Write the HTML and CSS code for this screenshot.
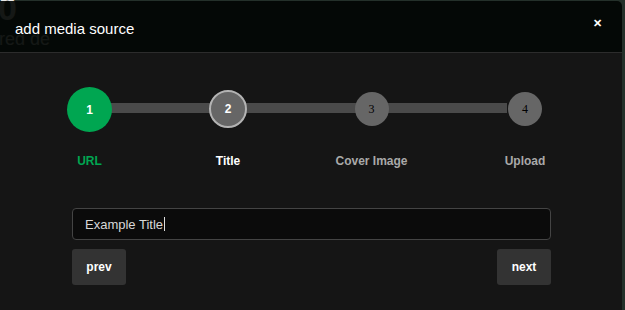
FILE: index.html
```html
<!DOCTYPE html>
<html>
<head>
<meta charset="utf-8">
<link rel="stylesheet" href="styles.css">
</head>
<body>
<div class="page">
  <div class="page-num">0</div>
  <div class="page-sub">ired de</div>
</div>
<div class="modal">
  <div class="modal-header">
    <span class="modal-title">add media source</span>
    <span class="close">&#x2715;</span>
  </div>
  <div class="modal-body">
    <div class="stepper">
      <div class="step step-done">
        <div class="dot">1</div>
        <div class="label">URL</div>
      </div>
      <div class="step step-active">
        <div class="dot">2</div>
        <div class="label">Title</div>
      </div>
      <div class="step step-todo step-wide">
        <div class="dot">3</div>
        <div class="label">Cover Image</div>
      </div>
      <div class="step step-todo step-last">
        <div class="dot">4</div>
        <div class="label">Upload</div>
      </div>
    </div>
    <div class="field">Example Title<span class="caret"></span></div>
    <div class="actions">
      <button class="btn">prev</button>
      <button class="btn">next</button>
    </div>
  </div>
</div>
</body>
</html>
```
FILE: styles.css
```css
html, body {
  margin: 0;
  padding: 0;
}
body {
  width: 625px;
  height: 310px;
  background: #24302a;
  overflow: hidden;
  position: relative;
  font-family: "Liberation Sans", Arial, sans-serif;
}
.page {
  position: absolute;
  left: -2px;
  top: -10px;
  color: #e8e8e8;
  font-weight: bold;
}
.page-num {
  font-size: 34px;
  line-height: 36px;
}
.page-sub {
  font-size: 18px;
  line-height: 18px;
  font-weight: normal;
  margin-left: -3px;
  margin-top: 4px;
}
.modal {
  position: absolute;
  left: -10px;
  top: 1px;
  width: 632px;
  height: 309px;
  border-radius: 0 5px 0 0;
  overflow: hidden;
  display: flex;
  flex-direction: column;
}
.modal-header {
  height: 51px;
  flex: none;
  background: rgba(2, 5, 3, 0.92);
  border-bottom: 1px solid #2c2c2c;
  display: flex;
  align-items: center;
  justify-content: space-between;
  padding: 0 20px 0 25px;
}
.modal-title {
  color: #fff;
  font-size: 15px;
  margin-top: 3px;
}
.close {
  color: #fff;
  font-size: 11px;
  font-weight: bold;
  margin-top: -6px;
}
.modal-body {
  flex: 1;
  background: #151515;
  padding: 34px 71px 0 82px;
}
.stepper {
  position: relative;
  display: flex;
  margin-left: -5px;
}
.stepper::before {
  content: "";
  position: absolute;
  left: 40px;
  width: 400px;
  top: 16px;
  height: 10px;
  background: #4a4a4a;
}
.step {
  position: relative;
  display: flex;
  flex-direction: column;
  align-items: center;
  width: 45px;
}
.step-active { width: 38px; margin-left: 97px; }
.step-wide { width: 73px; margin-left: 88px; }
.step-last { width: 40px; margin-left: 97px; }
.dot {
  box-sizing: border-box;
  border-radius: 50%;
  display: flex;
  align-items: center;
  justify-content: center;
  font-size: 12px;
  font-weight: bold;
  color: #fff;
}
.step-done .dot {
  width: 45px;
  height: 45px;
  background: #00a651;
}
.step-active .dot {
  width: 38px;
  height: 38px;
  margin-top: 3px;
  background: #666;
  border: 2px solid #b3b3b3;
  margin-bottom: 4px;
}
.step-todo .dot {
  width: 34px;
  height: 34px;
  margin-top: 5px;
  margin-bottom: 6px;
  background: #666;
  color: #000;
  font-weight: normal;
  font-family: "Liberation Serif", "Times New Roman", serif;
  font-size: 12px;
}
.label {
  margin-top: 22px;
  font-size: 12px;
  font-weight: bold;
  white-space: nowrap;
  color: #a9a9a9;
}
.step-done .label { color: #00a651; }
.step-active .label { color: #fff; }
.field {
  margin-top: 40px;
  box-sizing: border-box;
  height: 32px;
  border: 1px solid #444;
  border-radius: 4px;
  background: #0b0b0b;
  color: #d8d8d8;
  font-size: 13px;
  display: flex;
  align-items: center;
  padding-left: 12px;
}
.caret {
  display: inline-block;
  width: 1px;
  height: 14px;
  background: #ddd;
  margin-left: 1px;
}
.actions {
  margin-top: 9px;
  display: flex;
  justify-content: space-between;
}
.btn {
  width: 54px;
  height: 36px;
  border: none;
  border-radius: 3px;
  background: #333;
  color: #fff;
  font-family: "Liberation Sans", Arial, sans-serif;
  font-size: 12px;
  font-weight: bold;
  padding: 0;
}
```
